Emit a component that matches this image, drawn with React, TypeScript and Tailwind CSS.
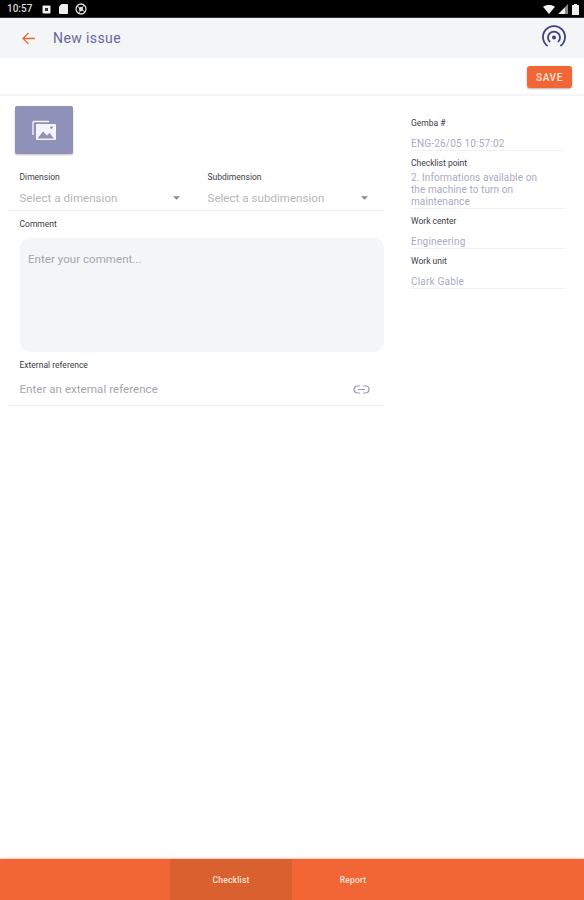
import React from "react";

function Field({ label, children, labelTop, lineTop }: { label: string; children: React.ReactNode; labelTop: string; lineTop: string }) {
  return (
    <div className={`flex flex-col ${labelTop}`}>
      <div className="text-[8.5px] leading-[12px] text-[#3c3c46]">{label}</div>
      <div className={`text-[10px] leading-[12px] tracking-[0.2px] text-[#a9aac6] border-b border-[#eef0f3] ${lineTop}`}>{children}</div>
    </div>
  );
}

export default function App() {
  return (
    <div className="w-[584px] h-[900px] flex flex-col bg-white overflow-hidden font-['Roboto',sans-serif]">
      {/* status bar */}
      <div className="h-[18px] shrink-0 bg-black flex items-center justify-between pl-[7px] pr-[5px] pt-[1px] border-b border-[#333]">
        <div className="flex items-center text-white">
          <span className="text-[10px] font-medium leading-none text-[#d8d8d8] w-[35px]">10:57</span>
          <svg width="9" height="9" viewBox="0 0 9 9"><rect x="0.5" y="0.5" width="8" height="8" rx="1" fill="#eee" /><rect x="3" y="3" width="3" height="3" fill="#333" /></svg>
          <svg width="9" height="10" viewBox="0 0 9 10" className="ml-[8px]"><path d="M2.5 0H8a1 1 0 0 1 1 1v8a1 1 0 0 1-1 1H1a1 1 0 0 1-1-1V2.500z" fill="#eee" /></svg>
          <svg width="12" height="12" viewBox="0 0 12 12" className="ml-[7px]"><circle cx="6" cy="6" r="5" fill="none" stroke="#ddd" strokeWidth="1.3" /><circle cx="6" cy="6" r="2.200" fill="#ddd" /><path d="M2 3l8 6M9 2L4 10" stroke="#ddd" strokeWidth="0.9" /></svg>
        </div>
        <div className="flex items-center gap-[3px]">
          <svg width="12" height="9" viewBox="0 0 12 9"><path d="M0 1.800C3.400-.6 8.600-.6 12 1.800L6 9z" fill="#f2f2f2" /></svg>
          <svg width="10" height="10" viewBox="0 0 10 10"><path d="M10 0v10H0z" fill="#888" /><path d="M7 3.500V10H.5z" fill="#eee" /></svg>
          <svg width="7" height="11" viewBox="0 0 7 11" className="ml-[1px]"><path d="M2 0h3v1h1.500a.5.5 0 0 1 .5.5v9a.5.5 0 0 1-.5.5H.5a.5.5 0 0 1-.5-.5v-9A.5.5 0 0 1 .5 1H2z" fill="#f0f0f0" /></svg>
        </div>
      </div>

      {/* header */}
      <div className="h-[40px] shrink-0 bg-[#f4f5f7] flex items-center pl-[22px] pr-[17px]">
        <svg width="13" height="13" viewBox="0 0 13 13" fill="none" stroke="#f0683c" strokeWidth="1.3">
          <path d="M13 6.500H1.200M6.500 1 1 6.500 6.500 12" />
        </svg>
        <span className="ml-[18px] text-[14px] tracking-[0.4px] text-[#66679c]">New issue</span>
        <svg width="26" height="26" viewBox="0 0 26 26" fill="none" stroke="#3e4183" strokeWidth="1.800" className="ml-auto">
          <circle cx="13" cy="12.500" r="2" fill="#3e4183" stroke="none" />
          <path d="M9 17a6 6 0 1 1 8 0" />
          <path d="M6.600 21a11 11 0 1 1 12.800 0" />
        </svg>
      </div>

      {/* toolbar */}
      <div className="h-[38px] shrink-0 border-b-2 border-[#f4f5f7] flex items-start justify-end pt-[8px] pr-[12px]">
        <button className="w-[45px] h-[22px] rounded-[3px] bg-[#f26535] text-[#fbe4da] text-[10px] font-medium tracking-[0.6px] shadow-[0_1px_2px_rgba(0,0,0,0.3)]">SAVE</button>
      </div>

      {/* content */}
      <div className="flex-1 flex">
        <div className="w-[376px] ml-[8px] shrink-0 flex flex-col">
          <div className="ml-[7px] mt-[10px] w-[58px] h-[48px] rounded-[2px] bg-[#8f91b8] shadow-[0_1px_2px_rgba(0,0,0,0.25)] flex items-center justify-center">
            <svg width="26" height="24" viewBox="0 0 26 24" fill="none">
              <path d="M2 17V4.500A1 1 0 0 1 3 3.500h15" stroke="#f3f3f8" strokeWidth="1.400" />
              <rect x="5" y="6" width="20" height="16" rx="1" fill="#f3f3f8" />
              <path d="M6.500 20.500l5.500-7 4 4 2.500-2.500 4.500 5.500z" fill="#8f91b8" />
              <circle cx="20.500" cy="9.500" r="1.300" fill="#8f91b8" />
            </svg>
          </div>

          <div className="mt-[17px] flex border-b border-[#eef0f3] h-[40px]">
            <div className="w-[188px] pl-[11.500px] pr-[16px]">
              <div className="text-[8.500px] leading-[12px] text-[#3c3c46]">Dimension</div>
              <div className="mt-[7px] flex items-center justify-between text-[11.500px] leading-[16px] tracking-[0.05px] text-[#b4b5b9]">
                <span>Select a dimension</span>
                <svg width="7" height="4" viewBox="0 0 8 4"><path d="M0 0h8L4 4z" fill="#8a8b92" /></svg>
              </div>
            </div>
            <div className="w-[188px] pl-[11.500px] pr-[16px]">
              <div className="text-[8.500px] leading-[12px] text-[#3c3c46]">Subdimension</div>
              <div className="mt-[7px] flex items-center justify-between text-[11.500px] leading-[16px] tracking-[0.05px] text-[#b4b5b9]">
                <span>Select a subdimension</span>
                <svg width="7" height="4" viewBox="0 0 8 4"><path d="M0 0h8L4 4z" fill="#8a8b92" /></svg>
              </div>
            </div>
          </div>

          <div className="ml-[11.500px] mt-[7px] text-[8.500px] leading-[12px] text-[#3c3c46]">Comment</div>
          <div className="ml-[12px] mt-[8px] h-[114px] rounded-[10px] bg-[#f4f5f7] pl-[8px] pt-[13px] text-[11.500px] leading-[16px] tracking-[0.05px] text-[#a5a6ab]">Enter your comment...</div>

          <div className="ml-[11.500px] mt-[7px] text-[8.500px] leading-[12px] text-[#3c3c46]">External reference</div>
          <div className="mt-[10px] h-[25px] border-b border-[#eef0f3] pl-[11.500px] pr-[14px] flex items-start justify-between text-[11.500px] leading-[16px] tracking-[0.05px] text-[#a5a6ab]">
            <span>Enter an external reference</span>
            <svg width="17" height="9" viewBox="0 0 17 9" fill="none" stroke="#9a9bb5" strokeWidth="1.200" className="mt-[4px]">
              <path d="M7 1H4.500a3.500 3.500 0 0 0 0 7H7M10 1h2.500a3.500 3.500 0 0 1 0 7H10M5 4.500h7" />
            </svg>
          </div>
        </div>

        <div className="ml-[27px] w-[153px] flex flex-col">
          <Field label="Gemba #" labelTop="mt-[21px]" lineTop="mt-[9px] h-[13px]">ENG-26/05 10:57:02</Field>
          <Field label="Checklist point" labelTop="mt-[6px]" lineTop="mt-[3px] h-[37px]">
            <div className="w-[135px] tracking-[0.1px]">2. Informations available on the machine to turn on maintenance</div>
          </Field>
          <Field label="Work center" labelTop="mt-[6px]" lineTop="mt-[9px] h-[13px]">Engineering</Field>
          <Field label="Work unit" labelTop="mt-[6px]" lineTop="mt-[9px] h-[13px]">Clark Gable</Field>
        </div>
      </div>

      {/* bottom bar */}
      <div className="h-[41px] shrink-0 bg-[#f26535] flex justify-center shadow-[0_-1px_2px_rgba(242,101,53,0.35)]">
        <div className="w-[122px] pt-[1px] bg-[#d9602f] flex items-center justify-center text-[8.500px] font-medium tracking-[0.2px] text-[#fbe4da]">Checklist</div>
        <div className="w-[122px] pt-[1px] flex items-center justify-center text-[8.500px] font-medium tracking-[0.2px] text-[#fbe4da]">Report</div>
      </div>
    </div>
  );
}
